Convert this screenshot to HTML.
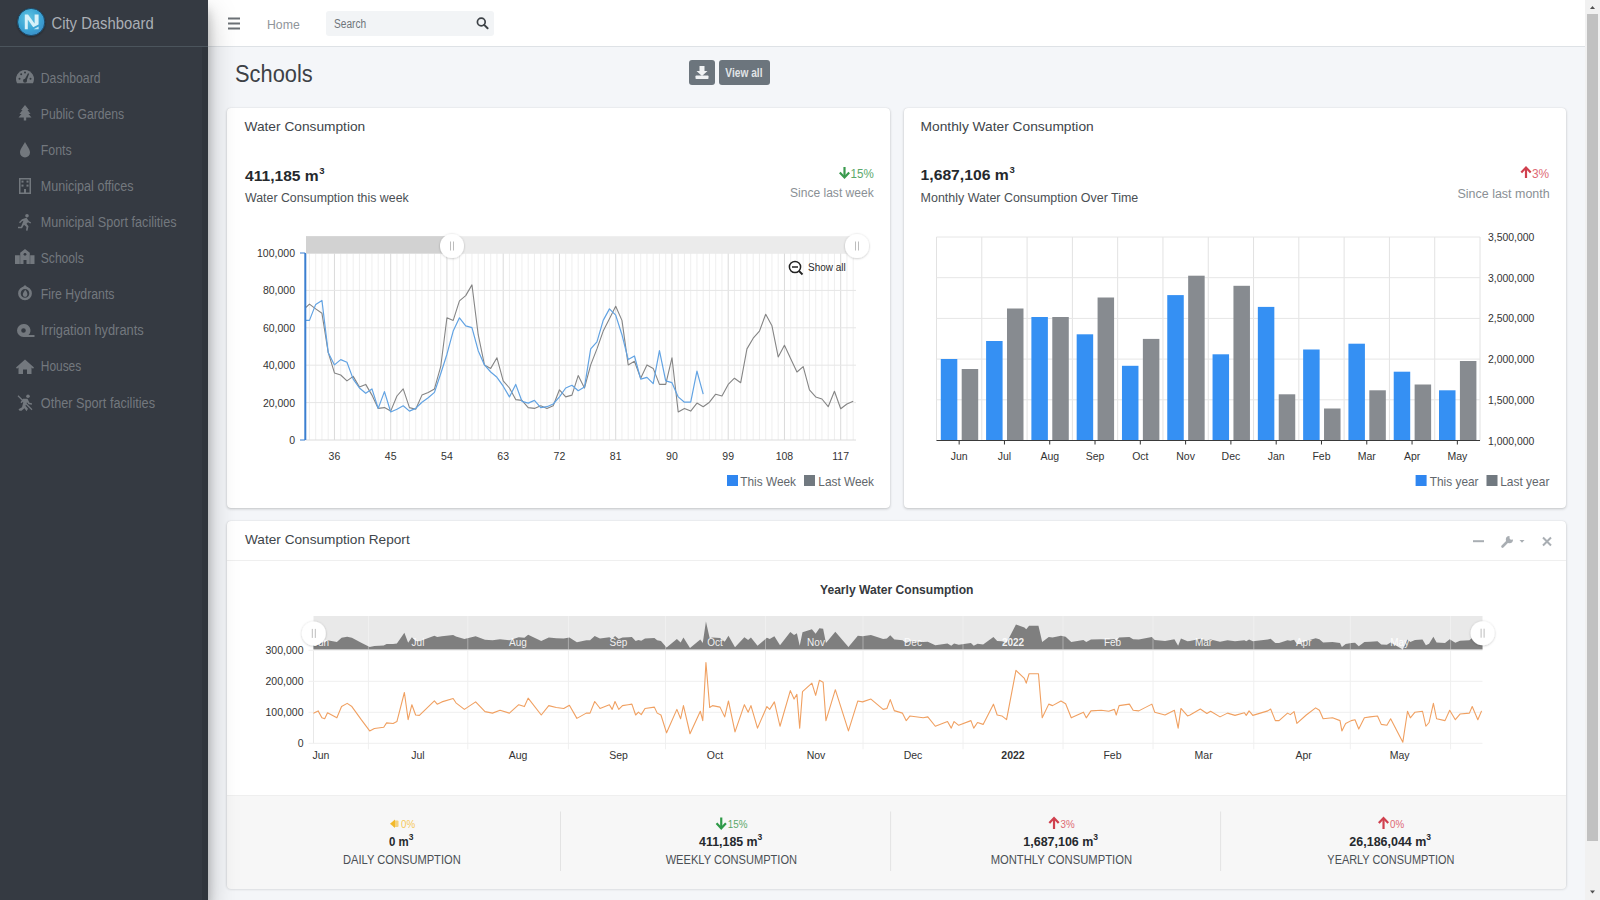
<!DOCTYPE html>
<html><head><meta charset="utf-8"><title>City Dashboard - Schools</title>
<style>
html,body{margin:0;padding:0;width:1600px;height:900px;overflow:hidden;background:#f4f6f9;font-family:"Liberation Sans",sans-serif}
.abs{position:absolute}
#sidebar{left:0;top:0;width:208px;height:900px;background:#353a42;box-shadow:0 14px 28px rgba(0,0,0,.25),0 10px 10px rgba(0,0,0,.22);z-index:2}
#brand{left:0;top:0;width:208px;height:46px;border-bottom:1px solid #4b545c}
#nav{left:208px;top:0;width:1377px;height:46px;background:#fff;border-bottom:1px solid #dee2e6;z-index:1}
#search{left:326px;top:11px;width:168px;height:25px;background:#f2f4f6;border-radius:3px;z-index:1}
.btn{background:#6c757d;border-radius:3px;top:60px;height:25px}
.card{background:#fff;border-radius:4px;box-shadow:0 0 1px rgba(0,0,0,.125),0 1px 3px rgba(0,0,0,.2)}
#c3foot{left:0;top:274px;width:1339px;height:93px;background:#f7f7f7;border-radius:0 0 4px 4px;border-top:1px solid #efefef}
#c3head{left:0;top:39px;width:1339px;height:1px;background:#efefef}
#vscroll{left:1585px;top:0;width:15px;height:900px;background:#f1f1f1;z-index:3}
#thumb{left:2px;top:14px;width:11px;height:827px;background:#c1c1c1}
svg{position:absolute;left:0;top:0;z-index:5}
text{font-family:"Liberation Sans",sans-serif}
</style></head><body>
<div id="sidebar" class="abs"><div id="brand" class="abs"></div><div class="abs" style="left:202px;top:47px;width:6px;height:853px;background:#30353c"></div></div>
<div id="nav" class="abs"></div>
<div id="search" class="abs"></div>
<div class="abs btn" style="left:689px;width:26px"></div>
<div class="abs btn" style="left:719px;width:51px"></div>
<div class="abs card" style="left:227px;top:108px;width:663px;height:400px"></div>
<div class="abs card" style="left:904px;top:108px;width:662px;height:400px"></div>
<div class="abs card" style="left:227px;top:521px;width:1339px;height:367px"><div id="c3head" class="abs"></div><div id="c3foot" class="abs"></div></div>
<div id="vscroll" class="abs"><div id="thumb" class="abs"></div>
<svg width="15" height="900" style="position:absolute;left:0;top:0"><path d="M5 9 L7.5 6 L10 9 Z" fill="#505050"/><path d="M5 890.5 L7.5 893.5 L10 890.5 Z" fill="#505050"/></svg></div>
<svg width="1600" height="900" viewBox="0 0 1600 900">
<defs><radialGradient id="lg" cx="0.4" cy="0.35" r="0.7"><stop offset="0" stop-color="#5fc2e0"/><stop offset="0.6" stop-color="#3aa5d5"/><stop offset="1" stop-color="#3a8cc8"/></radialGradient><filter id="sh" x="-50%" y="-50%" width="200%" height="200%"><feDropShadow dx="0" dy="1" stdDeviation="1.2" flood-color="#000" flood-opacity="0.35"/></filter></defs>
<circle cx="31.2" cy="22" r="13.6" fill="url(#lg)" stroke="#1c4a68" stroke-width="1" filter="url(#sh)"/>
<path d="M24.8 29.3 V14.6 H28 L34.6 23.6 V14.6 H38.6 V24.5 L33.2 27.3 L27.8 19.6 V29.3 Z" fill="#e3f6fc" opacity="0.92"/><path d="M33.6 29.3 L38.6 26.4 V29.3 Z" fill="#c9eefa" opacity="0.9"/>
<g transform="translate(25,77.8)" fill="#73787e"><path d="M-7.96 5.5 A9 9 0 1 1 7.96 5.5 Z"/><path d="M-1 3 L3 -4.5 L4.2 -4 L1.2 3.6 Z" fill="#343a40"/><circle cx="0" cy="3" r="2" fill="#343a40"/><circle cx="-5.5" cy="1" r="1" fill="#343a40"/><circle cx="-3.8" cy="-3.5" r="1" fill="#343a40"/><circle cx="0" cy="-5.2" r="1" fill="#343a40"/><circle cx="5.5" cy="1" r="1" fill="#343a40"/></g>
<g transform="translate(25,113.9)" fill="#73787e"><g transform="translate(0,-1.3)"><path d="M0 -7.5 L4 -2.5 H2.5 L5.5 1.5 H3.5 L6.5 5 H1.2 V8 H-1.2 V5 H-6.5 L-3.5 1.5 H-5.5 L-2.5 -2.5 H-4 Z"/></g></g>
<g transform="translate(25,150.0)" fill="#73787e"><path d="M0 -8 C2 -4 5 -1 5 2.5 A5 5 0 0 1 -5 2.5 C-5 -1 -2 -4 0 -8 Z"/></g>
<g transform="translate(25,186.1)" fill="#73787e"><path d="M-6 -8 H6 V8 H-6 Z M-4.5 -6.5 V6.5 H-1 V3 H1 V6.5 H4.5 V-6.5 Z"/><rect x="-3.5" y="-5.5" width="2" height="2"/><rect x="1.5" y="-5.5" width="2" height="2"/><rect x="-3.5" y="-1.5" width="2" height="2"/><rect x="1.5" y="-1.5" width="2" height="2"/></g>
<g transform="translate(25,222.2)" fill="#73787e"><circle cx="2" cy="-6.5" r="1.8"/><path d="M-3 -3 L1.5 -4.5 L4 -1 L6 0 L5.5 1.2 L3 0 L1.5 1.5 L3.5 4 L2.5 8.5 L1 8.3 L1.5 4.8 L-1 2.5 L-3 6 L-7 6 L-7 4.5 L-4 4.5 L-1.5 -1.5 L-3 -1 L-5 1 L-6 0 Z"/></g>
<g transform="translate(25,258.3)" fill="#73787e"><path d="M-10 -3 H-5.2 V5.7 H-10 Z M5.2 -3 H9.5 V5.7 H5.2 Z M-4.8 -5.5 L0 -9.3 L4.8 -5.5 V5.7 H1.5 V1.8 H-1.5 V5.7 H-4.8 Z"/><circle cx="0" cy="-4" r="1.4" fill="#353a42"/></g>
<g transform="translate(25,294.4)" fill="#73787e"><g transform="translate(0,-2)"><circle cx="0" cy="1" r="5.6" fill="none" stroke="#73787e" stroke-width="2.6"/><path d="M-3 -4.5 L0 -7.5 L3 -4.5 Z"/><path d="M-2.2 2.2 C-2.2 0 0 -1.5 0 -3 C1.5 -1.5 2.4 0 2.4 2.2 A2.3 2.3 0 0 1 -2.2 2.2 Z"/></g></g>
<g transform="translate(25,330.5)" fill="#73787e"><path d="M-1.5 -6.5 A6.5 6.5 0 1 0 -1.5 6.5 H9.5 V4.6 H3.5 A6.5 6.5 0 0 0 -1.5 -6.5 Z M-1.5 -2.3 A2.3 2.3 0 1 1 -1.5 2.3 A2.3 2.3 0 1 1 -1.5 -2.3 Z" fill-rule="evenodd"/></g>
<g transform="translate(25,366.6)" fill="#73787e"><path d="M0 -7 L9 1 L8 2.2 L6.5 1 V7.5 H2 V3 H-2 V7.5 H-6.5 V1 L-8 2.2 L-9 1 Z"/></g>
<g transform="translate(25,402.7)" fill="#73787e"><circle cx="3" cy="-6.5" r="1.8"/><path d="M-2 -4 L2.5 -4 L4.5 0 L7 0.5 L6.8 2 L3.5 1.5 L2 -0.5 L0.5 3 L3 6 L1.5 8.5 L-0.5 5.5 L-3.5 8 L-5.5 8 L-6.5 6.5 L-3 4.5 L-1.5 -1.5 L-3.5 0.5 L-4.5 -0.5 Z"/><path d="M-7 -7 L7 7" stroke="#73787e" stroke-width="1.3"/></g>
<rect x="228" y="17.5" width="12" height="2" fill="#6b7075"/><rect x="228" y="22.5" width="12" height="2" fill="#6b7075"/><rect x="228" y="27.5" width="12" height="2" fill="#6b7075"/>
<circle cx="481.3" cy="22" r="3.9" fill="none" stroke="#3d4247" stroke-width="1.7"/><path d="M484.2 24.9 L487.6 28.2" stroke="#3d4247" stroke-width="2" stroke-linecap="round"/>
<path d="M699.5 66 H704.5 V71 H707.5 L702 76 L696.5 71 H699.5 Z" fill="#f0f2f4"/><rect x="695.5" y="75.5" width="13" height="3.5" rx="0.8" fill="#f0f2f4"/>
<path d="M844.5 167 V177" stroke="#3a9a4e" stroke-width="2.2"/><path d="M839.8 172.5 L844.5 177.5 L849.2 172.5" fill="none" stroke="#3a9a4e" stroke-width="2.2"/>
<line x1="309.45" y1="253" x2="309.45" y2="440" stroke="#efefef" stroke-width="1"/>
<line x1="315.70" y1="253" x2="315.70" y2="440" stroke="#efefef" stroke-width="1"/>
<line x1="321.95" y1="253" x2="321.95" y2="440" stroke="#efefef" stroke-width="1"/>
<line x1="328.20" y1="253" x2="328.20" y2="440" stroke="#efefef" stroke-width="1"/>
<line x1="334.45" y1="253" x2="334.45" y2="440" stroke="#dadada" stroke-width="1"/>
<line x1="340.70" y1="253" x2="340.70" y2="440" stroke="#efefef" stroke-width="1"/>
<line x1="346.95" y1="253" x2="346.95" y2="440" stroke="#efefef" stroke-width="1"/>
<line x1="353.20" y1="253" x2="353.20" y2="440" stroke="#efefef" stroke-width="1"/>
<line x1="359.45" y1="253" x2="359.45" y2="440" stroke="#efefef" stroke-width="1"/>
<line x1="365.70" y1="253" x2="365.70" y2="440" stroke="#efefef" stroke-width="1"/>
<line x1="371.95" y1="253" x2="371.95" y2="440" stroke="#efefef" stroke-width="1"/>
<line x1="378.20" y1="253" x2="378.20" y2="440" stroke="#efefef" stroke-width="1"/>
<line x1="384.45" y1="253" x2="384.45" y2="440" stroke="#efefef" stroke-width="1"/>
<line x1="390.70" y1="253" x2="390.70" y2="440" stroke="#dadada" stroke-width="1"/>
<line x1="396.95" y1="253" x2="396.95" y2="440" stroke="#efefef" stroke-width="1"/>
<line x1="403.20" y1="253" x2="403.20" y2="440" stroke="#efefef" stroke-width="1"/>
<line x1="409.45" y1="253" x2="409.45" y2="440" stroke="#efefef" stroke-width="1"/>
<line x1="415.70" y1="253" x2="415.70" y2="440" stroke="#efefef" stroke-width="1"/>
<line x1="421.95" y1="253" x2="421.95" y2="440" stroke="#efefef" stroke-width="1"/>
<line x1="428.20" y1="253" x2="428.20" y2="440" stroke="#efefef" stroke-width="1"/>
<line x1="434.45" y1="253" x2="434.45" y2="440" stroke="#efefef" stroke-width="1"/>
<line x1="440.70" y1="253" x2="440.70" y2="440" stroke="#efefef" stroke-width="1"/>
<line x1="446.95" y1="253" x2="446.95" y2="440" stroke="#dadada" stroke-width="1"/>
<line x1="453.20" y1="253" x2="453.20" y2="440" stroke="#efefef" stroke-width="1"/>
<line x1="459.45" y1="253" x2="459.45" y2="440" stroke="#efefef" stroke-width="1"/>
<line x1="465.70" y1="253" x2="465.70" y2="440" stroke="#efefef" stroke-width="1"/>
<line x1="471.95" y1="253" x2="471.95" y2="440" stroke="#efefef" stroke-width="1"/>
<line x1="478.20" y1="253" x2="478.20" y2="440" stroke="#efefef" stroke-width="1"/>
<line x1="484.45" y1="253" x2="484.45" y2="440" stroke="#efefef" stroke-width="1"/>
<line x1="490.70" y1="253" x2="490.70" y2="440" stroke="#efefef" stroke-width="1"/>
<line x1="496.95" y1="253" x2="496.95" y2="440" stroke="#efefef" stroke-width="1"/>
<line x1="503.20" y1="253" x2="503.20" y2="440" stroke="#dadada" stroke-width="1"/>
<line x1="509.45" y1="253" x2="509.45" y2="440" stroke="#efefef" stroke-width="1"/>
<line x1="515.70" y1="253" x2="515.70" y2="440" stroke="#efefef" stroke-width="1"/>
<line x1="521.95" y1="253" x2="521.95" y2="440" stroke="#efefef" stroke-width="1"/>
<line x1="528.20" y1="253" x2="528.20" y2="440" stroke="#efefef" stroke-width="1"/>
<line x1="534.45" y1="253" x2="534.45" y2="440" stroke="#efefef" stroke-width="1"/>
<line x1="540.70" y1="253" x2="540.70" y2="440" stroke="#efefef" stroke-width="1"/>
<line x1="546.95" y1="253" x2="546.95" y2="440" stroke="#efefef" stroke-width="1"/>
<line x1="553.20" y1="253" x2="553.20" y2="440" stroke="#efefef" stroke-width="1"/>
<line x1="559.45" y1="253" x2="559.45" y2="440" stroke="#dadada" stroke-width="1"/>
<line x1="565.70" y1="253" x2="565.70" y2="440" stroke="#efefef" stroke-width="1"/>
<line x1="571.95" y1="253" x2="571.95" y2="440" stroke="#efefef" stroke-width="1"/>
<line x1="578.20" y1="253" x2="578.20" y2="440" stroke="#efefef" stroke-width="1"/>
<line x1="584.45" y1="253" x2="584.45" y2="440" stroke="#efefef" stroke-width="1"/>
<line x1="590.70" y1="253" x2="590.70" y2="440" stroke="#efefef" stroke-width="1"/>
<line x1="596.95" y1="253" x2="596.95" y2="440" stroke="#efefef" stroke-width="1"/>
<line x1="603.20" y1="253" x2="603.20" y2="440" stroke="#efefef" stroke-width="1"/>
<line x1="609.45" y1="253" x2="609.45" y2="440" stroke="#efefef" stroke-width="1"/>
<line x1="615.70" y1="253" x2="615.70" y2="440" stroke="#dadada" stroke-width="1"/>
<line x1="621.95" y1="253" x2="621.95" y2="440" stroke="#efefef" stroke-width="1"/>
<line x1="628.20" y1="253" x2="628.20" y2="440" stroke="#efefef" stroke-width="1"/>
<line x1="634.45" y1="253" x2="634.45" y2="440" stroke="#efefef" stroke-width="1"/>
<line x1="640.70" y1="253" x2="640.70" y2="440" stroke="#efefef" stroke-width="1"/>
<line x1="646.95" y1="253" x2="646.95" y2="440" stroke="#efefef" stroke-width="1"/>
<line x1="653.20" y1="253" x2="653.20" y2="440" stroke="#efefef" stroke-width="1"/>
<line x1="659.45" y1="253" x2="659.45" y2="440" stroke="#efefef" stroke-width="1"/>
<line x1="665.70" y1="253" x2="665.70" y2="440" stroke="#efefef" stroke-width="1"/>
<line x1="671.95" y1="253" x2="671.95" y2="440" stroke="#dadada" stroke-width="1"/>
<line x1="678.20" y1="253" x2="678.20" y2="440" stroke="#efefef" stroke-width="1"/>
<line x1="684.45" y1="253" x2="684.45" y2="440" stroke="#efefef" stroke-width="1"/>
<line x1="690.70" y1="253" x2="690.70" y2="440" stroke="#efefef" stroke-width="1"/>
<line x1="696.95" y1="253" x2="696.95" y2="440" stroke="#efefef" stroke-width="1"/>
<line x1="703.20" y1="253" x2="703.20" y2="440" stroke="#efefef" stroke-width="1"/>
<line x1="709.45" y1="253" x2="709.45" y2="440" stroke="#efefef" stroke-width="1"/>
<line x1="715.70" y1="253" x2="715.70" y2="440" stroke="#efefef" stroke-width="1"/>
<line x1="721.95" y1="253" x2="721.95" y2="440" stroke="#efefef" stroke-width="1"/>
<line x1="728.20" y1="253" x2="728.20" y2="440" stroke="#dadada" stroke-width="1"/>
<line x1="734.45" y1="253" x2="734.45" y2="440" stroke="#efefef" stroke-width="1"/>
<line x1="740.70" y1="253" x2="740.70" y2="440" stroke="#efefef" stroke-width="1"/>
<line x1="746.95" y1="253" x2="746.95" y2="440" stroke="#efefef" stroke-width="1"/>
<line x1="753.20" y1="253" x2="753.20" y2="440" stroke="#efefef" stroke-width="1"/>
<line x1="759.45" y1="253" x2="759.45" y2="440" stroke="#efefef" stroke-width="1"/>
<line x1="765.70" y1="253" x2="765.70" y2="440" stroke="#efefef" stroke-width="1"/>
<line x1="771.95" y1="253" x2="771.95" y2="440" stroke="#efefef" stroke-width="1"/>
<line x1="778.20" y1="253" x2="778.20" y2="440" stroke="#efefef" stroke-width="1"/>
<line x1="784.45" y1="253" x2="784.45" y2="440" stroke="#dadada" stroke-width="1"/>
<line x1="790.70" y1="253" x2="790.70" y2="440" stroke="#efefef" stroke-width="1"/>
<line x1="796.95" y1="253" x2="796.95" y2="440" stroke="#efefef" stroke-width="1"/>
<line x1="803.20" y1="253" x2="803.20" y2="440" stroke="#efefef" stroke-width="1"/>
<line x1="809.45" y1="253" x2="809.45" y2="440" stroke="#efefef" stroke-width="1"/>
<line x1="815.70" y1="253" x2="815.70" y2="440" stroke="#efefef" stroke-width="1"/>
<line x1="821.95" y1="253" x2="821.95" y2="440" stroke="#efefef" stroke-width="1"/>
<line x1="828.20" y1="253" x2="828.20" y2="440" stroke="#efefef" stroke-width="1"/>
<line x1="834.45" y1="253" x2="834.45" y2="440" stroke="#efefef" stroke-width="1"/>
<line x1="840.70" y1="253" x2="840.70" y2="440" stroke="#dadada" stroke-width="1"/>
<line x1="846.95" y1="253" x2="846.95" y2="440" stroke="#efefef" stroke-width="1"/>
<line x1="853.20" y1="253" x2="853.20" y2="440" stroke="#efefef" stroke-width="1"/>
<line x1="305.3" y1="253.00" x2="856" y2="253.00" stroke="#e6e6e6" stroke-width="1"/>
<line x1="305.3" y1="290.40" x2="856" y2="290.40" stroke="#e6e6e6" stroke-width="1"/>
<line x1="305.3" y1="327.80" x2="856" y2="327.80" stroke="#e6e6e6" stroke-width="1"/>
<line x1="305.3" y1="365.20" x2="856" y2="365.20" stroke="#e6e6e6" stroke-width="1"/>
<line x1="305.3" y1="402.60" x2="856" y2="402.60" stroke="#e6e6e6" stroke-width="1"/>
<line x1="305.3" y1="440.00" x2="856" y2="440.00" stroke="#dcdcdc" stroke-width="1"/>
<clipPath id="c1"><rect x="305.3" y="233" width="550.7" height="207"/></clipPath>
<polyline points="303.20,310.00 309.45,304.10 315.70,308.90 321.95,313.30 328.20,352.40 334.45,372.90 340.70,375.00 346.95,380.90 353.20,376.40 359.45,387.10 365.70,384.40 371.95,395.10 378.20,408.40 384.45,407.60 390.70,411.10 396.95,396.00 403.20,388.90 409.45,407.60 415.70,409.30 421.95,395.10 428.20,392.40 434.45,388.90 440.70,366.70 446.95,317.80 453.20,320.40 459.45,300.90 465.70,295.60 471.95,284.90 478.20,334.70 484.45,364.90 490.70,368.40 496.95,357.80 503.20,380.90 509.45,388.00 515.70,399.60 521.95,400.40 528.20,407.60 534.45,408.40 540.70,405.80 546.95,408.40 553.20,405.80 559.45,389.80 565.70,396.90 571.95,395.10 578.20,375.60 584.45,388.00 590.70,364.90 596.95,348.90 603.20,331.10 609.45,318.70 615.70,306.20 621.95,320.40 628.20,364.90 634.45,361.30 640.70,378.20 646.95,364.90 653.20,368.40 659.45,384.40 665.70,384.40 671.95,357.80 678.20,412.00 684.45,408.40 690.70,411.10 696.95,403.10 703.20,406.70 709.45,402.20 715.70,394.20 721.95,396.00 728.20,384.40 734.45,378.20 740.70,382.70 746.95,348.90 753.20,338.20 759.45,331.10 765.70,314.20 771.95,325.80 778.20,356.90 784.45,345.30 790.70,358.70 796.95,372.00 803.20,366.70 809.45,389.80 815.70,396.90 821.95,399.00 828.20,406.70 834.45,391.30 840.70,408.70 846.95,404.00 853.20,401.30" fill="none" stroke="#858585" stroke-width="1.1" stroke-linejoin="round" clip-path="url(#c1)"/>
<polyline points="303.20,320.40 309.45,320.40 315.70,304.40 321.95,300.50 328.20,352.40 334.45,364.90 340.70,359.60 346.95,362.20 353.20,379.10 359.45,388.00 365.70,393.30 371.95,388.90 378.20,408.40 384.45,391.60 390.70,412.00 396.95,409.30 403.20,405.80 409.45,411.10 415.70,408.40 421.95,402.20 428.20,397.80 434.45,392.40 440.70,373.80 446.95,354.20 453.20,331.10 459.45,317.80 465.70,325.80 471.95,327.60 478.20,350.70 484.45,364.90 490.70,372.00 496.95,377.30 503.20,386.20 509.45,396.90 515.70,384.40 521.95,401.30 528.20,403.10 534.45,400.40 540.70,407.60 546.95,406.70 553.20,404.00 559.45,396.90 565.70,388.00 571.95,385.30 578.20,390.70 584.45,387.10 590.70,348.90 596.95,341.80 603.20,320.40 609.45,308.90 615.70,315.10 621.95,334.70 628.20,359.60 634.45,356.00 640.70,379.10 646.95,377.30 653.20,383.60 659.45,350.70 665.70,380.90 671.95,382.70 678.20,396.90 684.45,402.20 690.70,402.20 696.95,371.10 703.20,394.20" fill="none" stroke="#62a3e3" stroke-width="1.2" stroke-linejoin="round" clip-path="url(#c1)"/>
<rect x="304.3" y="253" width="2" height="187" fill="#3b7fd0"/><line x1="300" y1="253" x2="305" y2="253" stroke="#3b7fd0" stroke-width="1"/><line x1="300" y1="440" x2="305" y2="440" stroke="#3b7fd0" stroke-width="1"/>
<rect x="306" y="236.2" width="551" height="17.3" fill="#ebebeb"/><rect x="306" y="236.2" width="146" height="17.3" fill="#d2d2d2"/>
<circle cx="452" cy="246" r="12" fill="#fff" filter="url(#sh2)"/><line x1="450.5" y1="241.5" x2="450.5" y2="250.5" stroke="#bdbdbd" stroke-width="1"/><line x1="453.5" y1="241.5" x2="453.5" y2="250.5" stroke="#bdbdbd" stroke-width="1"/>
<circle cx="857" cy="246" r="12" fill="#fff" filter="url(#sh2)"/><line x1="855.5" y1="241.5" x2="855.5" y2="250.5" stroke="#bdbdbd" stroke-width="1"/><line x1="858.5" y1="241.5" x2="858.5" y2="250.5" stroke="#bdbdbd" stroke-width="1"/>
<defs><filter id="sh2" x="-50%" y="-50%" width="200%" height="200%"><feDropShadow dx="0" dy="0.5" stdDeviation="1" flood-color="#000" flood-opacity="0.26"/></filter></defs>
<circle cx="795" cy="267" r="5.6" fill="#fff" stroke="#222" stroke-width="1.5"/><line x1="792" y1="267" x2="798" y2="267" stroke="#222" stroke-width="1.5"/><line x1="799" y1="271" x2="802.5" y2="274.5" stroke="#222" stroke-width="1.8"/>
<rect x="727" y="475" width="11" height="11" fill="#2f86f0"/><rect x="804" y="475" width="11" height="11" fill="#717980"/>
<path d="M1526 168 V178" stroke="#d0404e" stroke-width="2.2"/><path d="M1521.3 172.5 L1526 167.5 L1530.7 172.5" fill="none" stroke="#d0404e" stroke-width="2.2"/>
<line x1="936.50" y1="237" x2="936.50" y2="440.5" stroke="#e2e2e2" stroke-width="1"/>
<line x1="981.79" y1="237" x2="981.79" y2="440.5" stroke="#e2e2e2" stroke-width="1"/>
<line x1="1027.08" y1="237" x2="1027.08" y2="440.5" stroke="#e2e2e2" stroke-width="1"/>
<line x1="1072.38" y1="237" x2="1072.38" y2="440.5" stroke="#e2e2e2" stroke-width="1"/>
<line x1="1117.67" y1="237" x2="1117.67" y2="440.5" stroke="#e2e2e2" stroke-width="1"/>
<line x1="1162.96" y1="237" x2="1162.96" y2="440.5" stroke="#e2e2e2" stroke-width="1"/>
<line x1="1208.25" y1="237" x2="1208.25" y2="440.5" stroke="#e2e2e2" stroke-width="1"/>
<line x1="1253.54" y1="237" x2="1253.54" y2="440.5" stroke="#e2e2e2" stroke-width="1"/>
<line x1="1298.83" y1="237" x2="1298.83" y2="440.5" stroke="#e2e2e2" stroke-width="1"/>
<line x1="1344.12" y1="237" x2="1344.12" y2="440.5" stroke="#e2e2e2" stroke-width="1"/>
<line x1="1389.42" y1="237" x2="1389.42" y2="440.5" stroke="#e2e2e2" stroke-width="1"/>
<line x1="1434.71" y1="237" x2="1434.71" y2="440.5" stroke="#e2e2e2" stroke-width="1"/>
<line x1="1480.00" y1="237" x2="1480.00" y2="440.5" stroke="#e2e2e2" stroke-width="1"/>
<line x1="936.5" y1="237.00" x2="1480" y2="237.00" stroke="#e6e6e6" stroke-width="1"/>
<line x1="936.5" y1="277.70" x2="1480" y2="277.70" stroke="#e6e6e6" stroke-width="1"/>
<line x1="936.5" y1="318.40" x2="1480" y2="318.40" stroke="#e6e6e6" stroke-width="1"/>
<line x1="936.5" y1="359.10" x2="1480" y2="359.10" stroke="#e6e6e6" stroke-width="1"/>
<line x1="936.5" y1="399.80" x2="1480" y2="399.80" stroke="#e6e6e6" stroke-width="1"/>
<rect x="940.80" y="359" width="16.5" height="81.50" fill="#3590f3"/>
<rect x="961.70" y="369" width="16.5" height="71.50" fill="#878b90"/>
<line x1="959.15" y1="440.5" x2="959.15" y2="444.5" stroke="#333" stroke-width="1"/>
<rect x="986.09" y="341" width="16.5" height="99.50" fill="#3590f3"/>
<rect x="1006.99" y="308.5" width="16.5" height="132.00" fill="#878b90"/>
<line x1="1004.44" y1="440.5" x2="1004.44" y2="444.5" stroke="#333" stroke-width="1"/>
<rect x="1031.38" y="317" width="16.5" height="123.50" fill="#3590f3"/>
<rect x="1052.28" y="317" width="16.5" height="123.50" fill="#878b90"/>
<line x1="1049.73" y1="440.5" x2="1049.73" y2="444.5" stroke="#333" stroke-width="1"/>
<rect x="1076.67" y="334.3" width="16.5" height="106.20" fill="#3590f3"/>
<rect x="1097.58" y="297.5" width="16.5" height="143.00" fill="#878b90"/>
<line x1="1095.02" y1="440.5" x2="1095.02" y2="444.5" stroke="#333" stroke-width="1"/>
<rect x="1121.97" y="365.8" width="16.5" height="74.70" fill="#3590f3"/>
<rect x="1142.87" y="338.9" width="16.5" height="101.60" fill="#878b90"/>
<line x1="1140.31" y1="440.5" x2="1140.31" y2="444.5" stroke="#333" stroke-width="1"/>
<rect x="1167.26" y="295.1" width="16.5" height="145.40" fill="#3590f3"/>
<rect x="1188.16" y="275.7" width="16.5" height="164.80" fill="#878b90"/>
<line x1="1185.60" y1="440.5" x2="1185.60" y2="444.5" stroke="#333" stroke-width="1"/>
<rect x="1212.55" y="354.3" width="16.5" height="86.20" fill="#3590f3"/>
<rect x="1233.45" y="285.8" width="16.5" height="154.70" fill="#878b90"/>
<line x1="1230.90" y1="440.5" x2="1230.90" y2="444.5" stroke="#333" stroke-width="1"/>
<rect x="1257.84" y="306.9" width="16.5" height="133.60" fill="#3590f3"/>
<rect x="1278.74" y="394.3" width="16.5" height="46.20" fill="#878b90"/>
<line x1="1276.19" y1="440.5" x2="1276.19" y2="444.5" stroke="#333" stroke-width="1"/>
<rect x="1303.13" y="349.5" width="16.5" height="91.00" fill="#3590f3"/>
<rect x="1324.03" y="408.5" width="16.5" height="32.00" fill="#878b90"/>
<line x1="1321.48" y1="440.5" x2="1321.48" y2="444.5" stroke="#333" stroke-width="1"/>
<rect x="1348.42" y="343.7" width="16.5" height="96.80" fill="#3590f3"/>
<rect x="1369.33" y="390.3" width="16.5" height="50.20" fill="#878b90"/>
<line x1="1366.77" y1="440.5" x2="1366.77" y2="444.5" stroke="#333" stroke-width="1"/>
<rect x="1393.72" y="371.7" width="16.5" height="68.80" fill="#3590f3"/>
<rect x="1414.62" y="384.5" width="16.5" height="56.00" fill="#878b90"/>
<line x1="1412.06" y1="440.5" x2="1412.06" y2="444.5" stroke="#333" stroke-width="1"/>
<rect x="1439.01" y="390.3" width="16.5" height="50.20" fill="#3590f3"/>
<rect x="1459.91" y="361" width="16.5" height="79.50" fill="#878b90"/>
<line x1="1457.35" y1="440.5" x2="1457.35" y2="444.5" stroke="#333" stroke-width="1"/>
<line x1="936.5" y1="440.5" x2="1480" y2="440.5" stroke="#3a3a3a" stroke-width="1.2"/>
<rect x="1415.6" y="475" width="11" height="11" fill="#2f86f0"/><rect x="1486.5" y="475" width="11" height="11" fill="#717980"/>
<rect x="1473" y="540.2" width="11" height="2" fill="#a9aeb3"/>
<path d="M1502.5 546.5 L1507.5 541.5" stroke="#a9aeb3" stroke-width="2.6" stroke-linecap="round"/><path d="M1509.5 536 A3.6 3.6 0 1 0 1513 539.5 L1510.8 539.8 L1509.6 538.5 Z" fill="#a9aeb3"/><path d="M1519.5 540 L1524.5 540 L1522 542.8 Z" fill="#a9aeb3"/>
<path d="M1543 537.5 L1551 545.5 M1551 537.5 L1543 545.5" stroke="#a9aeb3" stroke-width="2"/>
<rect x="313.5" y="616" width="1169.0" height="33.5" fill="#e9e9e9"/>
<polygon points="313.5,649.5 313.44,649.5 313.44,640.30 318.13,639.47 321.88,642.03 324.69,642.38 327.50,640.16 336.88,642.03 341.56,637.87 347.19,636.69 351.88,637.87 361.25,642.73 369.69,646.89 374.38,645.99 383.75,645.50 386.57,643.91 393.13,644.11 396.88,643.42 404.38,632.67 408.13,642.73 411.88,637.18 415.63,640.99 419.38,641.13 434.38,635.79 437.20,636.97 441.88,636.13 453.13,634.89 455.95,636.48 464.38,638.91 475.64,636.13 485.01,639.74 492.51,640.30 500.01,639.26 509.39,640.30 518.76,637.18 524.39,637.87 528.14,634.75 541.26,640.99 548.77,637.52 556.27,638.22 563.77,638.56 569.39,637.38 576.89,642.24 586.27,640.30 590.02,640.30 594.71,636.00 599.39,638.22 600.00,638.56 609.38,637.18 612.19,638.91 615.00,636.00 618.75,638.91 622.50,637.52 628.13,637.18 631.88,636.97 635.63,640.99 638.44,639.95 641.25,640.85 645.00,638.56 654.38,638.08 657.19,640.30 660.94,640.99 666.57,647.58 676.88,638.91 680.63,642.38 683.44,637.52 690.01,647.93 700.32,639.60 702.76,643.07 705.94,621.57 709.69,638.22 712.51,637.52 720.01,638.08 724.70,641.69 728.45,635.79 735.01,647.24 744.38,637.18 748.13,639.95 750.95,637.52 757.51,645.85 766.89,637.87 769.70,638.91 774.39,636.13 780.01,645.15 790.32,631.97 794.07,635.09 796.89,633.36 799.70,645.85 802.51,632.32 811.89,629.20 815.64,633.71 819.39,628.16 823.14,628.85 825.95,643.07 835.33,631.63 848.45,646.89 857.83,635.79 862.52,636.13 870.95,635.09 883.14,638.91 886.89,638.56 890.27,635.30 894.39,639.47 895.00,639.47 902.50,640.30 906.25,643.07 910.00,641.34 923.13,642.03 927.81,641.69 935.32,645.15 947.50,643.42 951.25,645.85 954.07,643.42 958.75,644.81 970.94,643.07 973.75,645.85 977.51,643.77 983.13,644.46 993.44,636.97 997.19,640.99 1001.88,641.34 1006.57,642.73 1015.95,624.48 1024.38,627.46 1026.26,629.20 1029.07,625.73 1038.45,625.73 1042.20,642.03 1048.76,636.97 1052.51,637.52 1060.95,635.79 1065.64,636.83 1071.26,642.03 1083.45,639.95 1086.26,642.03 1090.95,639.47 1101.26,639.26 1108.76,639.60 1114.39,638.91 1116.26,640.99 1119.08,637.52 1129.39,636.97 1133.14,639.26 1138.77,639.47 1151.89,636.97 1154.70,639.95 1165.02,640.99 1174.39,639.26 1178.14,645.85 1180.96,638.56 1187.52,641.34 1190.00,640.99 1200.31,638.77 1206.88,640.44 1210.63,639.60 1220.00,641.69 1227.50,640.30 1235.00,641.13 1244.38,640.16 1246.25,641.13 1249.07,639.47 1252.82,641.13 1267.82,639.47 1270.63,638.77 1275.32,643.07 1279.07,643.07 1287.51,640.30 1290.32,640.85 1294.07,639.74 1296.88,644.11 1306.26,640.99 1315.63,638.35 1319.38,639.26 1323.13,642.38 1332.51,642.03 1340.01,643.07 1341.88,646.89 1345.63,644.11 1351.26,643.07 1355.01,642.73 1358.76,646.19 1364.39,642.03 1370.01,641.69 1377.51,641.34 1381.26,644.46 1386.89,644.81 1390.64,642.38 1402.83,649.50 1407.51,639.60 1410.33,642.03 1415.01,639.95 1422.51,639.60 1425.89,645.15 1429.08,643.77 1433.39,636.69 1436.58,642.38 1445.02,643.07 1449.70,639.26 1455.33,642.73 1460.02,640.64 1469.39,640.30 1472.21,637.87 1477.83,642.73 1481.58,639.47 1482.5,639.47 1482.5,649.5" fill="#7f7f7f"/>
<line x1="368.4" y1="616" x2="368.4" y2="649.5" stroke="#ffffff" stroke-opacity="0.35" stroke-width="1"/>
<line x1="467.8" y1="616" x2="467.8" y2="649.5" stroke="#ffffff" stroke-opacity="0.35" stroke-width="1"/>
<line x1="568.4" y1="616" x2="568.4" y2="649.5" stroke="#ffffff" stroke-opacity="0.35" stroke-width="1"/>
<line x1="665.5" y1="616" x2="665.5" y2="649.5" stroke="#ffffff" stroke-opacity="0.35" stroke-width="1"/>
<line x1="765.5" y1="616" x2="765.5" y2="649.5" stroke="#ffffff" stroke-opacity="0.35" stroke-width="1"/>
<line x1="863" y1="616" x2="863" y2="649.5" stroke="#ffffff" stroke-opacity="0.35" stroke-width="1"/>
<line x1="963" y1="616" x2="963" y2="649.5" stroke="#ffffff" stroke-opacity="0.35" stroke-width="1"/>
<line x1="1063" y1="616" x2="1063" y2="649.5" stroke="#ffffff" stroke-opacity="0.35" stroke-width="1"/>
<line x1="1153" y1="616" x2="1153" y2="649.5" stroke="#ffffff" stroke-opacity="0.35" stroke-width="1"/>
<line x1="1253.8" y1="616" x2="1253.8" y2="649.5" stroke="#ffffff" stroke-opacity="0.35" stroke-width="1"/>
<line x1="1350.3" y1="616" x2="1350.3" y2="649.5" stroke="#ffffff" stroke-opacity="0.35" stroke-width="1"/>
<line x1="1450.6" y1="616" x2="1450.6" y2="649.5" stroke="#ffffff" stroke-opacity="0.35" stroke-width="1"/>
<line x1="368.4" y1="650.3" x2="368.4" y2="749.3" stroke="#f0f0f0" stroke-width="1"/>
<line x1="467.8" y1="650.3" x2="467.8" y2="749.3" stroke="#f0f0f0" stroke-width="1"/>
<line x1="568.4" y1="650.3" x2="568.4" y2="749.3" stroke="#f0f0f0" stroke-width="1"/>
<line x1="665.5" y1="650.3" x2="665.5" y2="749.3" stroke="#f0f0f0" stroke-width="1"/>
<line x1="765.5" y1="650.3" x2="765.5" y2="749.3" stroke="#f0f0f0" stroke-width="1"/>
<line x1="863" y1="650.3" x2="863" y2="749.3" stroke="#f0f0f0" stroke-width="1"/>
<line x1="963" y1="650.3" x2="963" y2="749.3" stroke="#f0f0f0" stroke-width="1"/>
<line x1="1063" y1="650.3" x2="1063" y2="749.3" stroke="#f0f0f0" stroke-width="1"/>
<line x1="1153" y1="650.3" x2="1153" y2="749.3" stroke="#f0f0f0" stroke-width="1"/>
<line x1="1253.8" y1="650.3" x2="1253.8" y2="749.3" stroke="#f0f0f0" stroke-width="1"/>
<line x1="1350.3" y1="650.3" x2="1350.3" y2="749.3" stroke="#f0f0f0" stroke-width="1"/>
<line x1="1450.6" y1="650.3" x2="1450.6" y2="749.3" stroke="#f0f0f0" stroke-width="1"/>
<line x1="313.5" y1="650.3" x2="313.5" y2="743.3" stroke="#e8e8e8" stroke-width="1"/>
<line x1="308.5" y1="650.30" x2="1482.5" y2="650.30" stroke="#efefef" stroke-width="1"/>
<line x1="308.5" y1="681.30" x2="1482.5" y2="681.30" stroke="#efefef" stroke-width="1"/>
<line x1="308.5" y1="712.30" x2="1482.5" y2="712.30" stroke="#efefef" stroke-width="1"/>
<line x1="308.5" y1="743.30" x2="1482.5" y2="743.30" stroke="#efefef" stroke-width="1"/>
<polyline points="313.44,713.13 318.13,710.88 321.88,717.82 324.69,718.75 327.50,712.75 336.88,717.82 341.56,706.57 347.19,703.38 351.88,706.57 361.25,719.69 369.69,730.94 374.38,728.50 383.75,727.19 386.57,722.88 393.13,723.44 396.88,721.57 404.38,692.50 408.13,719.69 411.88,704.69 415.63,715.00 419.38,715.38 434.38,700.94 437.20,704.13 441.88,701.88 453.13,698.50 455.95,702.82 464.38,709.38 475.64,701.88 485.01,711.63 492.51,713.13 500.01,710.32 509.39,713.13 518.76,704.69 524.39,706.57 528.14,698.13 541.26,715.00 548.77,705.63 556.27,707.50 563.77,708.44 569.39,705.25 576.89,718.38 586.27,713.13 590.02,713.13 594.71,701.50 599.39,707.50 600.00,708.44 609.38,704.69 612.19,709.38 615.00,701.50 618.75,709.38 622.50,705.63 628.13,704.69 631.88,704.13 635.63,715.00 638.44,712.19 641.25,714.63 645.00,708.44 654.38,707.13 657.19,713.13 660.94,715.00 666.57,732.82 676.88,709.38 680.63,718.75 683.44,705.63 690.01,733.75 700.32,711.25 702.76,720.63 705.94,662.50 709.69,707.50 712.51,705.63 720.01,707.13 724.70,716.88 728.45,700.94 735.01,731.88 744.38,704.69 748.13,712.19 750.95,705.63 757.51,728.13 766.89,706.57 769.70,709.38 774.39,701.88 780.01,726.25 790.32,690.63 794.07,699.07 796.89,694.38 799.70,728.13 802.51,691.56 811.89,683.13 815.64,695.32 819.39,680.31 823.14,682.19 825.95,720.63 835.33,689.69 848.45,730.94 857.83,700.94 862.52,701.88 870.95,699.07 883.14,709.38 886.89,708.44 890.27,699.63 894.39,710.88 895.00,710.88 902.50,713.13 906.25,720.63 910.00,715.94 923.13,717.82 927.81,716.88 935.32,726.25 947.50,721.57 951.25,728.13 954.07,721.57 958.75,725.32 970.94,720.63 973.75,728.13 977.51,722.50 983.13,724.38 993.44,704.13 997.19,715.00 1001.88,715.94 1006.57,719.69 1015.95,670.38 1024.38,678.44 1026.26,683.13 1029.07,673.75 1038.45,673.75 1042.20,717.82 1048.76,704.13 1052.51,705.63 1060.95,700.94 1065.64,703.75 1071.26,717.82 1083.45,712.19 1086.26,717.82 1090.95,710.88 1101.26,710.32 1108.76,711.25 1114.39,709.38 1116.26,715.00 1119.08,705.63 1129.39,704.13 1133.14,710.32 1138.77,710.88 1151.89,704.13 1154.70,712.19 1165.02,715.00 1174.39,710.32 1178.14,728.13 1180.96,708.44 1187.52,715.94 1190.00,715.00 1200.31,709.00 1206.88,713.50 1210.63,711.25 1220.00,716.88 1227.50,713.13 1235.00,715.38 1244.38,712.75 1246.25,715.38 1249.07,710.88 1252.82,715.38 1267.82,710.88 1270.63,709.00 1275.32,720.63 1279.07,720.63 1287.51,713.13 1290.32,714.63 1294.07,711.63 1296.88,723.44 1306.26,715.00 1315.63,707.88 1319.38,710.32 1323.13,718.75 1332.51,717.82 1340.01,720.63 1341.88,730.94 1345.63,723.44 1351.26,720.63 1355.01,719.69 1358.76,729.07 1364.39,717.82 1370.01,716.88 1377.51,715.94 1381.26,724.38 1386.89,725.32 1390.64,718.75 1402.83,742.19 1407.51,711.25 1410.33,717.82 1415.01,712.19 1422.51,711.25 1425.89,726.25 1429.08,722.50 1433.39,703.38 1436.58,718.75 1445.02,720.63 1449.70,710.32 1455.33,719.69 1460.02,714.07 1469.39,713.13 1472.21,706.57 1477.83,719.69 1481.58,710.88" fill="none" stroke="#f0a061" stroke-width="1.1" stroke-linejoin="round"/>
<circle cx="313.8" cy="633.4" r="12" fill="#fff" filter="url(#sh2)"/><line x1="312.3" y1="628.9" x2="312.3" y2="637.9" stroke="#bdbdbd" stroke-width="1"/><line x1="315.3" y1="628.9" x2="315.3" y2="637.9" stroke="#bdbdbd" stroke-width="1"/>
<circle cx="1482.6" cy="633.2" r="12" fill="#fff" filter="url(#sh2)"/><line x1="1481.1" y1="628.7" x2="1481.1" y2="637.7" stroke="#bdbdbd" stroke-width="1"/><line x1="1484.1" y1="628.7" x2="1484.1" y2="637.7" stroke="#bdbdbd" stroke-width="1"/>
<line x1="560.5" y1="811.5" x2="560.5" y2="871" stroke="#e3e3e3" stroke-width="1"/>
<line x1="890.6" y1="811.5" x2="890.6" y2="871" stroke="#e3e3e3" stroke-width="1"/>
<line x1="1220.6" y1="811.5" x2="1220.6" y2="871" stroke="#e3e3e3" stroke-width="1"/>
<path d="M390.01982421875 823.7 L395.01982421875 819.5 V827.9 Z" fill="#f2b92c"/><path d="M394.01982421875 823.7 A4.2 4.2 0 1 1 394.01982421875 823.69" fill="none"/>
<rect x="393.51982421875" y="820.5" width="5" height="6.4" rx="1" fill="#f2b92c" opacity="0.6"/>
<path d="M721.2375744140625 817.5 V828" stroke="#2f9a48" stroke-width="2.2"/><path d="M716.5375744140624 823.2 L721.2375744140625 828.3 L725.9375744140625 823.2" fill="none" stroke="#2f9a48" stroke-width="2.2"/>
<path d="M1054.01982421875 818.5 V829" stroke="#d0404e" stroke-width="2.2"/><path d="M1049.31982421875 823 L1054.01982421875 818 L1058.71982421875 823" fill="none" stroke="#d0404e" stroke-width="2.2"/>
<path d="M1383.51982421875 818.5 V829" stroke="#d0404e" stroke-width="2.2"/><path d="M1378.81982421875 823 L1383.51982421875 818 L1388.21982421875 823" fill="none" stroke="#d0404e" stroke-width="2.2"/>
<text x="51.50" y="29.00" font-size="17" fill="#abafb5" textLength="102.20" lengthAdjust="spacingAndGlyphs">City Dashboard</text>
<text x="40.80" y="82.60" font-size="14" fill="#73787e" textLength="59.70" lengthAdjust="spacingAndGlyphs">Dashboard</text>
<text x="40.80" y="118.70" font-size="14" fill="#73787e" textLength="83.40" lengthAdjust="spacingAndGlyphs">Public Gardens</text>
<text x="40.80" y="154.80" font-size="14" fill="#73787e" textLength="30.90" lengthAdjust="spacingAndGlyphs">Fonts</text>
<text x="40.80" y="190.90" font-size="14" fill="#73787e" textLength="92.70" lengthAdjust="spacingAndGlyphs">Municipal offices</text>
<text x="40.80" y="227.00" font-size="14" fill="#73787e" textLength="135.70" lengthAdjust="spacingAndGlyphs">Municipal Sport facilities</text>
<text x="40.80" y="263.10" font-size="14" fill="#73787e" textLength="43.00" lengthAdjust="spacingAndGlyphs">Schools</text>
<text x="40.80" y="299.20" font-size="14" fill="#73787e" textLength="73.70" lengthAdjust="spacingAndGlyphs">Fire Hydrants</text>
<text x="40.80" y="335.30" font-size="14" fill="#73787e" textLength="102.90" lengthAdjust="spacingAndGlyphs">Irrigation hydrants</text>
<text x="40.80" y="371.40" font-size="14" fill="#73787e" textLength="40.40" lengthAdjust="spacingAndGlyphs">Houses</text>
<text x="40.80" y="407.50" font-size="14" fill="#73787e" textLength="114.20" lengthAdjust="spacingAndGlyphs">Other Sport facilities</text>
<text x="267.00" y="29.00" font-size="13.5" fill="#8f959a" textLength="32.70" lengthAdjust="spacingAndGlyphs">Home</text>
<text x="334.00" y="27.90" font-size="12" fill="#6f757a" textLength="32.20" lengthAdjust="spacingAndGlyphs">Search</text>
<text x="235.00" y="82.00" font-size="23" fill="#3d4146" textLength="77.70" lengthAdjust="spacingAndGlyphs">Schools</text>
<text x="725.30" y="76.60" font-size="12" fill="#eef0f2" font-weight="700" fill-opacity="0.92" textLength="37.20" lengthAdjust="spacingAndGlyphs">View all</text>
<text x="244.50" y="130.70" font-size="13.5" fill="#40454a" textLength="120.70" lengthAdjust="spacingAndGlyphs">Water Consumption</text>
<text x="245.00" y="180.60" font-size="14.5" fill="#25292d" font-weight="700" textLength="73.70" lengthAdjust="spacingAndGlyphs">411,185 m</text>
<text x="319.30" y="173.60" font-size="9.5" fill="#25292d" font-weight="700">3</text>
<text x="245.00" y="202.00" font-size="12.5" fill="#4a4f54" textLength="163.70" lengthAdjust="spacingAndGlyphs">Water Consumption this week</text>
<text x="850.50" y="178.00" font-size="12" fill="#5aa86a" textLength="23.20" lengthAdjust="spacingAndGlyphs">15%</text>
<text x="790.00" y="197.20" font-size="12.5" fill="#8a9095" textLength="83.70" lengthAdjust="spacingAndGlyphs">Since last week</text>
<text x="295.00" y="257.00" font-size="10.5" fill="#333333" text-anchor="end">100,000</text>
<text x="295.00" y="294.40" font-size="10.5" fill="#333333" text-anchor="end">80,000</text>
<text x="295.00" y="331.80" font-size="10.5" fill="#333333" text-anchor="end">60,000</text>
<text x="295.00" y="369.20" font-size="10.5" fill="#333333" text-anchor="end">40,000</text>
<text x="295.00" y="406.60" font-size="10.5" fill="#333333" text-anchor="end">20,000</text>
<text x="295.00" y="444.00" font-size="10.5" fill="#333333" text-anchor="end">0</text>
<text x="334.45" y="459.60" font-size="10.5" fill="#333333" text-anchor="middle">36</text>
<text x="390.70" y="459.60" font-size="10.5" fill="#333333" text-anchor="middle">45</text>
<text x="446.95" y="459.60" font-size="10.5" fill="#333333" text-anchor="middle">54</text>
<text x="503.20" y="459.60" font-size="10.5" fill="#333333" text-anchor="middle">63</text>
<text x="559.45" y="459.60" font-size="10.5" fill="#333333" text-anchor="middle">72</text>
<text x="615.70" y="459.60" font-size="10.5" fill="#333333" text-anchor="middle">81</text>
<text x="671.95" y="459.60" font-size="10.5" fill="#333333" text-anchor="middle">90</text>
<text x="728.20" y="459.60" font-size="10.5" fill="#333333" text-anchor="middle">99</text>
<text x="784.45" y="459.60" font-size="10.5" fill="#333333" text-anchor="middle">108</text>
<text x="840.70" y="459.60" font-size="10.5" fill="#333333" text-anchor="middle">117</text>
<text x="808.00" y="271.30" font-size="10" fill="#2b2b2b" textLength="37.70" lengthAdjust="spacingAndGlyphs">Show all</text>
<text x="740.30" y="486.00" font-size="13" fill="#62676c" textLength="55.70" lengthAdjust="spacingAndGlyphs">This Week</text>
<text x="818.30" y="486.00" font-size="13" fill="#62676c" textLength="55.70" lengthAdjust="spacingAndGlyphs">Last Week</text>
<text x="920.60" y="131.10" font-size="13.5" fill="#40454a" textLength="173.10" lengthAdjust="spacingAndGlyphs">Monthly Water Consumption</text>
<text x="920.60" y="180.30" font-size="14.5" fill="#25292d" font-weight="700" textLength="88.10" lengthAdjust="spacingAndGlyphs">1,687,106 m</text>
<text x="1009.60" y="173.40" font-size="9.5" fill="#25292d" font-weight="700">3</text>
<text x="920.60" y="202.20" font-size="12.5" fill="#4a4f54" textLength="217.70" lengthAdjust="spacingAndGlyphs">Monthly Water Consumption Over Time</text>
<text x="1532.00" y="178.00" font-size="12" fill="#de6a75" textLength="17.20" lengthAdjust="spacingAndGlyphs">3%</text>
<text x="1457.50" y="197.50" font-size="12.5" fill="#8a9095" textLength="92.20" lengthAdjust="spacingAndGlyphs">Since last month</text>
<text x="1488.00" y="241.00" font-size="10.5" fill="#333333" textLength="46.40" lengthAdjust="spacingAndGlyphs">3,500,000</text>
<text x="1488.00" y="281.70" font-size="10.5" fill="#333333" textLength="46.40" lengthAdjust="spacingAndGlyphs">3,000,000</text>
<text x="1488.00" y="322.40" font-size="10.5" fill="#333333" textLength="46.40" lengthAdjust="spacingAndGlyphs">2,500,000</text>
<text x="1488.00" y="363.10" font-size="10.5" fill="#333333" textLength="46.40" lengthAdjust="spacingAndGlyphs">2,000,000</text>
<text x="1488.00" y="403.80" font-size="10.5" fill="#333333" textLength="46.40" lengthAdjust="spacingAndGlyphs">1,500,000</text>
<text x="1488.00" y="444.50" font-size="10.5" fill="#333333" textLength="46.40" lengthAdjust="spacingAndGlyphs">1,000,000</text>
<text x="959.15" y="459.60" font-size="10.5" fill="#333333" text-anchor="middle">Jun</text>
<text x="1004.44" y="459.60" font-size="10.5" fill="#333333" text-anchor="middle">Jul</text>
<text x="1049.73" y="459.60" font-size="10.5" fill="#333333" text-anchor="middle">Aug</text>
<text x="1095.02" y="459.60" font-size="10.5" fill="#333333" text-anchor="middle">Sep</text>
<text x="1140.31" y="459.60" font-size="10.5" fill="#333333" text-anchor="middle">Oct</text>
<text x="1185.60" y="459.60" font-size="10.5" fill="#333333" text-anchor="middle">Nov</text>
<text x="1230.90" y="459.60" font-size="10.5" fill="#333333" text-anchor="middle">Dec</text>
<text x="1276.19" y="459.60" font-size="10.5" fill="#333333" text-anchor="middle">Jan</text>
<text x="1321.48" y="459.60" font-size="10.5" fill="#333333" text-anchor="middle">Feb</text>
<text x="1366.77" y="459.60" font-size="10.5" fill="#333333" text-anchor="middle">Mar</text>
<text x="1412.06" y="459.60" font-size="10.5" fill="#333333" text-anchor="middle">Apr</text>
<text x="1457.35" y="459.60" font-size="10.5" fill="#333333" text-anchor="middle">May</text>
<text x="1429.80" y="486.00" font-size="13" fill="#62676c" textLength="48.70" lengthAdjust="spacingAndGlyphs">This year</text>
<text x="1500.20" y="486.00" font-size="13" fill="#62676c" textLength="49.20" lengthAdjust="spacingAndGlyphs">Last year</text>
<text x="245.00" y="544.00" font-size="13.5" fill="#40454a" textLength="164.70" lengthAdjust="spacingAndGlyphs">Water Consumption Report</text>
<text x="820.00" y="593.80" font-size="12.5" fill="#35393d" font-weight="700" textLength="153.50" lengthAdjust="spacingAndGlyphs">Yearly Water Consumption</text>
<text x="321" y="645.8" font-size="10" fill="#ffffff" fill-opacity="0.9" text-anchor="middle">Jun</text>
<text x="418" y="645.8" font-size="10" fill="#ffffff" fill-opacity="0.9" text-anchor="middle">Jul</text>
<text x="518" y="645.8" font-size="10" fill="#ffffff" fill-opacity="0.9" text-anchor="middle">Aug</text>
<text x="618.5" y="645.8" font-size="10" fill="#ffffff" fill-opacity="0.9" text-anchor="middle">Sep</text>
<text x="715" y="645.8" font-size="10" fill="#ffffff" fill-opacity="0.9" text-anchor="middle">Oct</text>
<text x="816" y="645.8" font-size="10" fill="#ffffff" fill-opacity="0.9" text-anchor="middle">Nov</text>
<text x="913" y="645.8" font-size="10" fill="#ffffff" fill-opacity="0.9" text-anchor="middle">Dec</text>
<text x="1013" y="645.8" font-size="10" fill="#ffffff" fill-opacity="0.9" text-anchor="middle" font-weight="700">2022</text>
<text x="1112.5" y="645.8" font-size="10" fill="#ffffff" fill-opacity="0.9" text-anchor="middle">Feb</text>
<text x="1203.6" y="645.8" font-size="10" fill="#ffffff" fill-opacity="0.9" text-anchor="middle">Mar</text>
<text x="1303.7" y="645.8" font-size="10" fill="#ffffff" fill-opacity="0.9" text-anchor="middle">Apr</text>
<text x="1399.7" y="645.8" font-size="10" fill="#ffffff" fill-opacity="0.9" text-anchor="middle">May</text>
<text x="303.50" y="654.30" font-size="10.5" fill="#333333" text-anchor="end">300,000</text>
<text x="303.50" y="685.30" font-size="10.5" fill="#333333" text-anchor="end">200,000</text>
<text x="303.50" y="716.30" font-size="10.5" fill="#333333" text-anchor="end">100,000</text>
<text x="303.50" y="747.30" font-size="10.5" fill="#333333" text-anchor="end">0</text>
<text x="321.00" y="758.60" font-size="10.5" fill="#333333" text-anchor="middle">Jun</text>
<text x="418.00" y="758.60" font-size="10.5" fill="#333333" text-anchor="middle">Jul</text>
<text x="518.00" y="758.60" font-size="10.5" fill="#333333" text-anchor="middle">Aug</text>
<text x="618.50" y="758.60" font-size="10.5" fill="#333333" text-anchor="middle">Sep</text>
<text x="715.00" y="758.60" font-size="10.5" fill="#333333" text-anchor="middle">Oct</text>
<text x="816.00" y="758.60" font-size="10.5" fill="#333333" text-anchor="middle">Nov</text>
<text x="913.00" y="758.60" font-size="10.5" fill="#333333" text-anchor="middle">Dec</text>
<text x="1013.00" y="758.60" font-size="10.5" fill="#333333" font-weight="700" text-anchor="middle">2022</text>
<text x="1112.50" y="758.60" font-size="10.5" fill="#333333" text-anchor="middle">Feb</text>
<text x="1203.60" y="758.60" font-size="10.5" fill="#333333" text-anchor="middle">Mar</text>
<text x="1303.70" y="758.60" font-size="10.5" fill="#333333" text-anchor="middle">Apr</text>
<text x="1399.70" y="758.60" font-size="10.5" fill="#333333" text-anchor="middle">May</text>
<text x="401.02" y="828.40" font-size="11.5" fill="#f5c85a" textLength="14.16" lengthAdjust="spacingAndGlyphs">0%</text>
<text x="389.00" y="845.60" font-size="12" fill="#25292d" font-weight="700" textLength="19.70" lengthAdjust="spacingAndGlyphs">0 m</text>
<text x="408.70" y="840.20" font-size="8.5" fill="#25292d" font-weight="700">3</text>
<text x="343.00" y="864.00" font-size="12" fill="#4a4f54" textLength="117.70" lengthAdjust="spacingAndGlyphs">DAILY CONSUMPTION</text>
<text x="727.74" y="828.40" font-size="11.5" fill="#5aa86a" textLength="19.72" lengthAdjust="spacingAndGlyphs">15%</text>
<text x="699.10" y="845.60" font-size="12" fill="#25292d" font-weight="700" textLength="58.50" lengthAdjust="spacingAndGlyphs">411,185 m</text>
<text x="757.60" y="840.20" font-size="8.5" fill="#25292d" font-weight="700">3</text>
<text x="665.65" y="864.00" font-size="12" fill="#4a4f54" textLength="131.40" lengthAdjust="spacingAndGlyphs">WEEKLY CONSUMPTION</text>
<text x="1060.52" y="828.40" font-size="11.5" fill="#de6a75" textLength="14.16" lengthAdjust="spacingAndGlyphs">3%</text>
<text x="1023.35" y="845.60" font-size="12" fill="#25292d" font-weight="700" textLength="70.00" lengthAdjust="spacingAndGlyphs">1,687,106 m</text>
<text x="1093.35" y="840.20" font-size="8.5" fill="#25292d" font-weight="700">3</text>
<text x="990.65" y="864.00" font-size="12" fill="#4a4f54" textLength="141.40" lengthAdjust="spacingAndGlyphs">MONTHLY CONSUMPTION</text>
<text x="1390.02" y="828.40" font-size="11.5" fill="#de6a75" textLength="14.16" lengthAdjust="spacingAndGlyphs">0%</text>
<text x="1349.35" y="845.60" font-size="12" fill="#25292d" font-weight="700" textLength="77.00" lengthAdjust="spacingAndGlyphs">26,186,044 m</text>
<text x="1426.35" y="840.20" font-size="8.5" fill="#25292d" font-weight="700">3</text>
<text x="1327.35" y="864.00" font-size="12" fill="#4a4f54" textLength="127.00" lengthAdjust="spacingAndGlyphs">YEARLY CONSUMPTION</text>
</svg>
</body></html>
